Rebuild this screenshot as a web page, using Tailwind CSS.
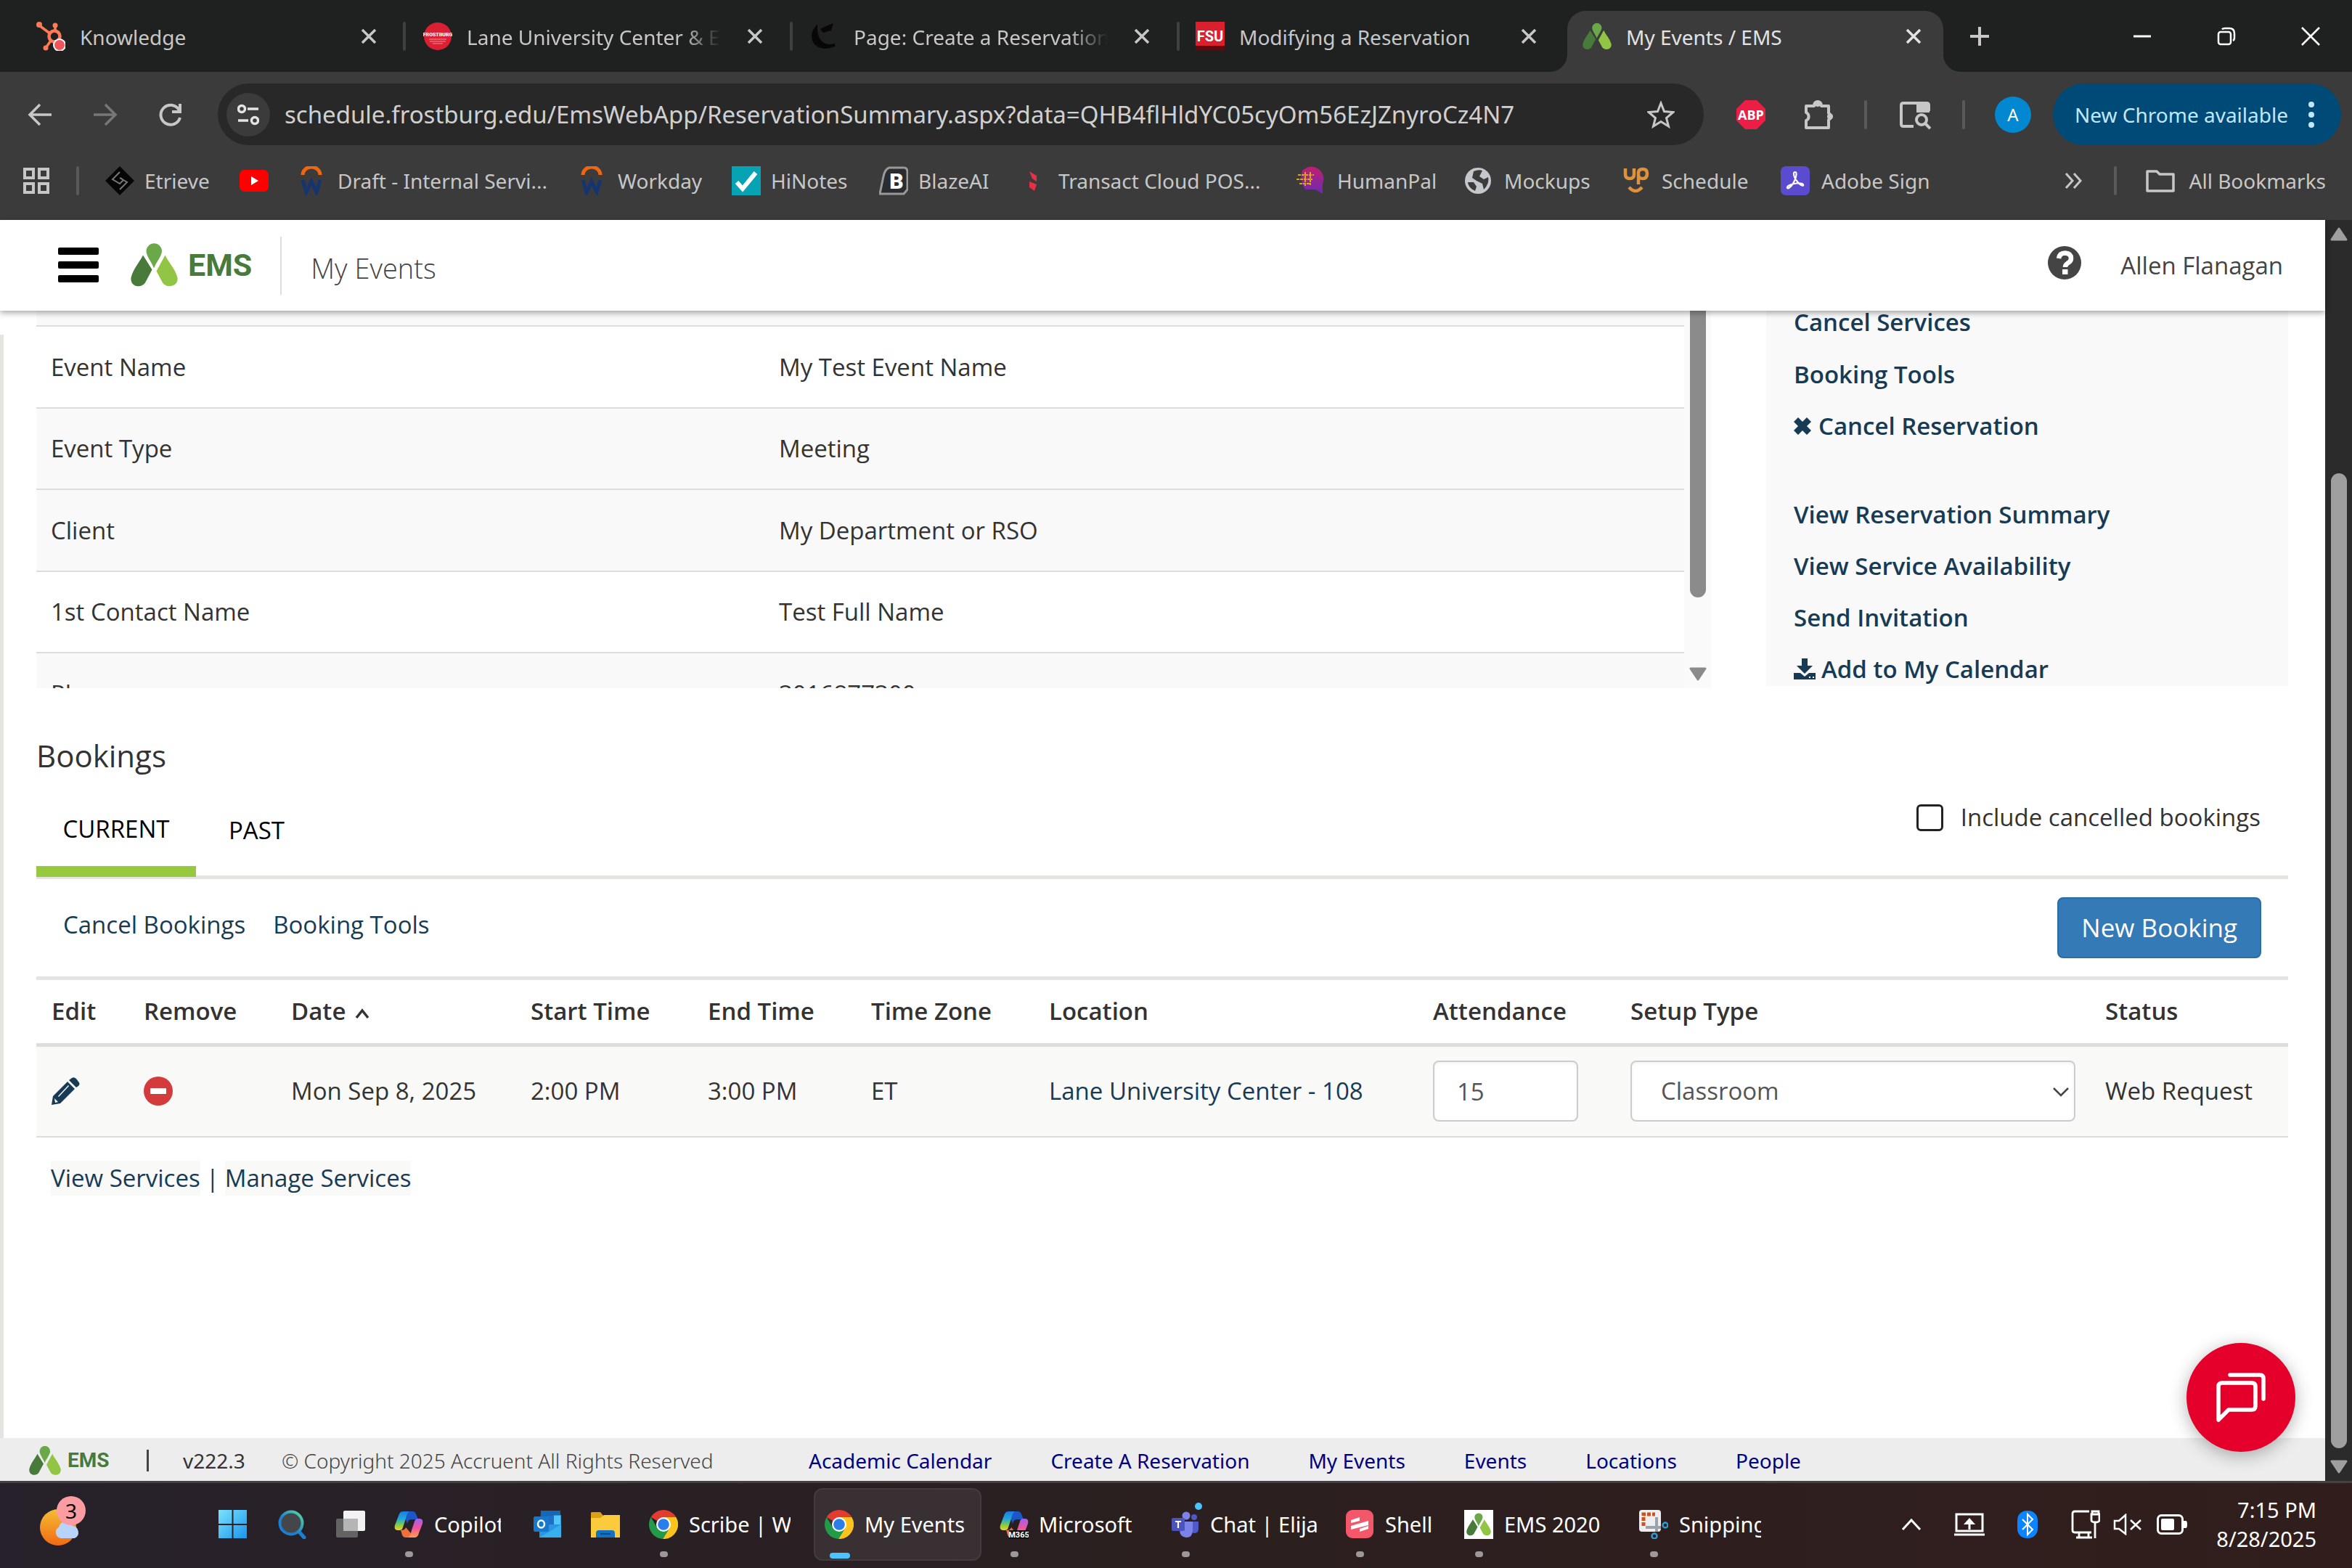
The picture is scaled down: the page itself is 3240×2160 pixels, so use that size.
<!DOCTYPE html>
<html lang="en">
<head>
<meta charset="utf-8">
<title>My Events / EMS</title>
<script src="https://cdn.jsdelivr.net/npm/@tailwindcss/browser@4"></script>
</head>
<body class="flex h-screen flex-col overflow-hidden bg-white font-['Open_Sans',sans-serif] text-[33px] leading-[48px] text-[#333]">

<svg class="absolute h-0 w-0" aria-hidden="true">
  <symbol id="ems" viewBox="0 0 65 59">
    <path fill="#6aa84a" d="M32 34C29 26 21.500 17 21.500 10.500A10.500 10.500 0 0 1 43 10.500C43 17 35 26 32 34z"/>
    <path fill="#487a3b" d="M17 16L29.500 36L20 54C15 62-1 60 .5 47C4 34 12 26 17 16z"/>
    <path fill="#92c544" d="M47.500 16L35.500 38L44 54C49 62 66 60 64.500 47C61 34 52 26 47.500 16z"/>
  </symbol>
  <symbol id="x" viewBox="0 0 22 22"><path d="M2 2L20 20M20 2L2 20" fill="none" stroke="currentColor" stroke-width="3.500"/></symbol>
  <symbol id="workday" viewBox="0 0 32 40">
    <path d="M4 12a12 11 0 0 1 24 0" fill="none" stroke="#f0660f" stroke-width="5"/>
    <path d="M4 19L9 36L16 21L23 36L28 19" fill="none" stroke="#16356f" stroke-width="5"/>
  </symbol>
  <symbol id="chrome" viewBox="0 0 40 40">
    <path fill="#e33b2e" d="M20 20L2.700 10A20 20 0 0 1 37.300 10z"/>
    <path fill="#fcc31e" d="M20 10H37.300A20 20 0 0 1 19 40L28.500 24z"/>
    <path fill="#229a48" d="M2.700 10A20 20 0 0 0 19 40L28.500 25L20 29L11.500 25z"/>
    <circle cx="20" cy="20" r="10" fill="#fff"/><circle cx="20" cy="20" r="7.800" fill="#2b7de9"/>
  </symbol>
  <linearGradient id="cpA" x1="0" y1="0" x2="0" y2="1"><stop offset="0" stop-color="#1b7be8"/><stop offset=".4" stop-color="#22a7d8"/><stop offset=".7" stop-color="#7cc950"/><stop offset="1" stop-color="#f5d21c"/></linearGradient>
  <linearGradient id="cpB" x1="0" y1="0" x2="0" y2="1"><stop offset="0" stop-color="#a060f0"/><stop offset=".5" stop-color="#f0549c"/><stop offset="1" stop-color="#fba049"/></linearGradient>
  <symbol id="copilot" viewBox="0 0 40 40">
    <path fill="#1c56c9" d="M12 2h13c4 0 5 3 6 6l2 5h-9c-4 0-5 3-6 6z"/>
    <path fill="url(#cpA)" d="M12 2h9c-3 2-4 6-5 10l-4 12c-1 3-2 4-5 4H5c-4 0-5-3-4-7L6 8c1-4 3-6 6-6z"/>
    <path fill="#f0703c" d="M28 38H16c-4 0-5-3-6-7l-1-3c4 0 6-1 7-4z"/>
    <path fill="url(#cpB)" d="M28 38h-9c3-2 4-6 5-10l4-12c1-3 2-4 5-4h2c4 0 5 3 4 7l-5 13c-1 4-3 6-6 6z"/>
  </symbol>
</svg>

<!-- Tab strip -->
<header class="shrink-0 bg-[#3b3b3b] font-['Noto_Sans','Open_Sans',sans-serif] text-[28px] leading-[40px] text-[#c7c7c7]">
  <div class="flex h-[99px] bg-[#1f2120] pl-[22px]">
    <div class="flex w-[533px] min-w-0 items-center pr-[36px] pl-[28px]">
      <svg class="h-10 w-10 shrink-0" viewBox="0 0 40 40"><g stroke="#ff7a59" stroke-width="3.500" fill="none"><path d="M4 5L20 17M26 6V14M20 26L13 36"/><circle cx="25" cy="20" r="7.500" stroke-width="4.500"/></g><circle cx="4" cy="4" r="4" fill="#ff7a59"/><circle cx="26" cy="5" r="3.500" fill="#ff7a59"/><circle cx="13" cy="36" r="3.500" fill="#ff7a59"/><circle cx="32" cy="32" r="9" fill="#fff"/><circle cx="32" cy="32" r="7" fill="#f2545b"/></svg>
      <span class="ml-5 flex-1 truncate pt-0.5">Knowledge</span>
      <button aria-label="Close tab"><svg class="h-[22px] w-[22px]"><use href="#x"/></svg></button>
    </div>
    <div class="flex w-[533px] min-w-0 items-center pr-[37px]">
      <i class="h-10 w-1 shrink-0 rounded bg-[#3f4140]"></i>
      <svg class="ml-[24px] h-10 w-10 shrink-0" viewBox="0 0 40 40"><circle cx="20" cy="20" r="19" fill="#dc1f33"/><text x="20" y="20" text-anchor="middle" font-family="Roboto" font-weight="900" font-size="7" fill="#fff">FROSTBURG</text><path d="M8 24H32M9 27H31M13 30H27" stroke="#f0909a" stroke-width="1"/></svg>
      <span class="mr-[36px] ml-5 flex-1 overflow-hidden pt-0.5 whitespace-nowrap [mask-image:linear-gradient(to_right,#000_85%,transparent)]">Lane University Center &amp; Ev</span>
      <button aria-label="Close tab"><svg class="h-[22px] w-[22px]"><use href="#x"/></svg></button>
    </div>
    <div class="flex w-[533px] min-w-0 items-center pr-[37px]">
      <i class="h-10 w-1 shrink-0 rounded bg-[#3f4140]"></i>
      <svg class="ml-[24px] h-10 w-10 shrink-0" viewBox="0 0 40 40"><path d="M8 9C-3 24 10 42 34 32C18 36 8 26 8 9z" fill="#070707" stroke="#070707" stroke-width="4"/><path d="M14 10L24 5L32 2L29 12L18 15z" fill="#070707"/></svg>
      <span class="mr-[36px] ml-5 flex-1 overflow-hidden pt-0.5 whitespace-nowrap [mask-image:linear-gradient(to_right,#000_85%,transparent)]">Page: Create a Reservation</span>
      <button aria-label="Close tab"><svg class="h-[22px] w-[22px]"><use href="#x"/></svg></button>
    </div>
    <div class="flex w-[533px] min-w-0 items-center pr-[37px]">
      <i class="h-10 w-1 shrink-0 rounded bg-[#3f4140]"></i>
      <svg class="ml-[22px] h-10 w-10 shrink-0" viewBox="0 0 40 40"><rect width="40" height="40" fill="#d9202c"/><path d="M0 33H40V40H0z" fill="#5c0a0e"/><text x="20" y="27" text-anchor="middle" font-family="Roboto" font-weight="700" font-size="20" fill="#fff">FSU</text></svg>
      <span class="ml-5 flex-1 truncate pt-0.5">Modifying a Reservation</span>
      <button aria-label="Close tab"><svg class="h-[22px] w-[22px]"><use href="#x"/></svg></button>
    </div>
    <div class="relative mt-[15px] ml-[5px] flex w-[518px] min-w-0 items-center rounded-t-[25px] bg-[#3b3b3b] pr-[30px] pb-[14px] pl-[21px] text-[#e3e3e3]">
      <svg class="absolute bottom-0 -left-6 h-6 w-6" viewBox="0 0 24 24"><path d="M24 0V24H0A24 24 0 0 0 24 0z" fill="#3b3b3b"/></svg>
      <svg class="absolute -right-6 bottom-0 h-6 w-6" viewBox="0 0 24 24"><path d="M0 0V24H24A24 24 0 0 1 0 0z" fill="#3b3b3b"/></svg>
      <svg class="h-10 w-10 shrink-0"><use href="#ems"/></svg>
      <span class="ml-5 flex-1 truncate pt-0.5">My Events / EMS</span>
      <button aria-label="Close tab"><svg class="h-[22px] w-[22px]"><use href="#x"/></svg></button>
    </div>
    <button aria-label="New tab" class="ml-[37px]"><svg class="h-[26px] w-[26px]" viewBox="0 0 26 26"><path d="M13 0V26M0 13H26" stroke="#c7c7c7" stroke-width="4"/></svg></button>
    <div class="mr-[44px] ml-auto flex items-center gap-[90px] text-white">
      <button aria-label="Minimize"><svg class="h-[26px] w-[26px]" viewBox="0 0 26 26"><path d="M1 13H25" stroke="#fff" stroke-width="3"/></svg></button>
      <button aria-label="Restore"><svg class="h-[26px] w-[26px]" viewBox="0 0 26 26" fill="none" stroke="#fff" stroke-width="2.500"><rect x="2" y="7" width="17" height="17" rx="3"/><path d="M7 3.500Q8 2 11 2H17Q24 2 24 9V15Q24 18 22 19"/></svg></button>
      <button aria-label="Close window"><svg class="h-[26px] w-[26px]" viewBox="0 0 26 26"><path d="M1 1L25 25M25 1L1 25" stroke="#fff" stroke-width="2.500"/></svg></button>
    </div>
  </div>

  <!-- Address bar -->
  <div class="flex h-[117px] items-center pr-[15px] pl-[38px]">
    <div class="flex items-center gap-[56px]">
      <button aria-label="Back"><svg class="h-[34px] w-[34px]" viewBox="0 0 34 34"><path d="M33 17H4M17 3L3 17L17 31" fill="none" stroke="#c7c7c7" stroke-width="3.500"/></svg></button>
      <button aria-label="Forward"><svg class="h-[34px] w-[34px]" viewBox="0 0 34 34"><path d="M1 17H30M17 3L31 17L17 31" fill="none" stroke="#777" stroke-width="3.500"/></svg></button>
      <button aria-label="Reload"><svg class="h-[34px] w-[34px]" viewBox="0 0 34 34"><path d="M29 11A13.500 13.500 0 1 0 30 21M30 2V13H19" fill="none" stroke="#c7c7c7" stroke-width="4"/></svg></button>
    </div>
    <div class="ml-12 flex h-[85px] min-w-0 flex-1 items-center rounded-full bg-[#282828] pr-[40px] pl-3">
      <button aria-label="Site information" class="flex h-[60px] w-[60px] shrink-0 items-center justify-center rounded-full bg-[#3b3b3b]"><svg class="h-[30px] w-[30px]" viewBox="0 0 30 30" fill="none" stroke="#e3e3e3" stroke-width="3.500"><circle cx="6" cy="7" r="4.500"/><path d="M14 7H29M1 23H15"/><circle cx="24" cy="23" r="4.500"/></svg></button>
      <input aria-label="Address" class="ml-5 min-w-0 flex-1 bg-transparent text-[33px] leading-[48px] text-[#d0d0d0]" value="schedule.frostburg.edu/EmsWebApp/ReservationSummary.aspx?data=QHB4flHldYC05cyOm56EzJZnyroCz4N7">
      <button aria-label="Bookmark this page"><svg class="h-[38px] w-[38px]" viewBox="0 0 38 38"><path d="M19 3L23.500 14.500L36 15.500L26.500 23.500L29.500 35L19 28.500L8.500 35L11.500 23.500L2 15.500L14.500 14.500z" fill="none" stroke="#c7c7c7" stroke-width="3"/></svg></button>
    </div>
    <button aria-label="ABP" class="ml-[45px]"><svg class="h-10 w-10" viewBox="0 0 40 40"><path d="M12 0H28L40 12V28L28 40H12L0 28V12z" fill="#ed1e45"/><text x="20" y="26.500" text-anchor="middle" font-family="Open Sans" font-weight="700" font-size="18" fill="#fff">ABP</text></svg></button>
    <button aria-label="Extensions" class="ml-[52px]"><svg class="h-[42px] w-[42px]" viewBox="0 0 42 42"><path d="M4 9H15V8A5 5 0 0 1 25 8V9H35V19A5 5 0 0 1 35 28V39H4V29A6 6 0 0 0 4 18z" fill="none" stroke="#c7c7c7" stroke-width="4" stroke-linejoin="round"/><circle cx="37" cy="23.500" r="4" fill="#c7c7c7"/><circle cx="20" cy="6" r="4" fill="#c7c7c7"/></svg></button>
    <i class="ml-[42px] h-10 w-1 rounded bg-[#5a5a5a]"></i>
    <button aria-label="Search tabs" class="ml-[44px]"><svg class="h-[42px] w-[44px]" viewBox="0 0 44 42"><path d="M20 37H6Q3 37 3 34V8Q3 5 6 5H38Q41 5 41 8V16" fill="none" stroke="#c7c7c7" stroke-width="4"/><path d="M24 5H42V18H24z" fill="#c7c7c7"/><circle cx="31" cy="28" r="7" fill="none" stroke="#c7c7c7" stroke-width="4"/><path d="M36 33L43 40" stroke="#c7c7c7" stroke-width="4"/></svg></button>
    <i class="ml-[43px] h-10 w-1 rounded bg-[#5a5a5a]"></i>
    <button class="ml-[41px] flex h-[50px] w-[50px] items-center justify-center rounded-full bg-[#0288d1] text-[24px] text-white">A</button>
    <button class="ml-[30px] flex h-[85px] items-center rounded-full bg-[#004a77] pr-[36px] pl-[30px] text-[#c2e7ff]">New Chrome available<svg class="ml-[27px] h-[36px] w-[10px]" viewBox="0 0 10 36" fill="#c2e7ff"><circle cx="5" cy="4" r="4"/><circle cx="5" cy="18" r="4"/><circle cx="5" cy="32" r="4"/></svg></button>
  </div>

  <!-- Bookmarks bar -->
  <nav class="flex h-[87px] items-center whitespace-nowrap pb-[21px] pl-[32px]">
    <svg class="h-[36px] w-[36px] shrink-0" viewBox="0 0 36 36" fill="none" stroke="#c7c7c7" stroke-width="4"><path d="M2 2H14V14H2zM22 2H34V14H22zM2 22H14V34H2zM22 22H34V34H22z"/></svg>
    <i class="ml-[37px] h-10 w-1 shrink-0 rounded bg-[#5a5a5a]"></i>
    <a href="#" class="ml-[36px] flex w-[185px] items-center gap-[14px]"><svg class="h-10 w-10" viewBox="0 0 40 40"><path d="M20 0L40 20L20 40L0 20z" fill="#050505"/><path d="M20 8L10 18L20 24L25 19L21 16M20 32L30 22L20 16" fill="none" stroke="#777" stroke-width="2"/></svg>Etrieve</a>
    <a href="#" aria-label="YouTube" class="w-[83px]"><svg class="h-[30px] w-10" viewBox="0 0 40 30"><rect width="40" height="30" rx="7" fill="#f00"/><path d="M16 9L26 15L16 21z" fill="#fff"/></svg></a>
    <a href="#" class="flex w-[386px] items-center gap-5"><svg class="h-10 w-8"><use href="#workday"/></svg>Draft - Internal Servi...</a>
    <a href="#" class="flex w-[209px] items-center gap-5"><svg class="h-10 w-8"><use href="#workday"/></svg>Workday</a>
    <a href="#" class="flex w-[203px] items-center gap-[14px]"><svg class="h-10 w-10" viewBox="0 0 40 40"><rect width="40" height="40" fill="#06a3b5"/><path d="M7 22L15 31L33 9" fill="none" stroke="#fff" stroke-width="6"/></svg>HiNotes</a>
    <a href="#" class="flex w-[201px] items-center gap-[14px]"><svg class="h-10 w-10" viewBox="0 0 40 40"><path d="M14 2H34Q39 2 39 8V32L34 38H1L6 14Q8 4 14 2z" fill="#2a2c2f" stroke="#999" stroke-width="3"/><text x="24" y="31" text-anchor="middle" font-family="Roboto" font-weight="900" font-size="30" fill="#fff">B</text></svg>BlazeAI</a>
    <a href="#" class="flex w-[374px] items-center gap-[20px]"><svg class="h-10 w-[26px]" viewBox="0 0 26 40" fill="#e82f45"><path d="M6 7L16 13V21L10 17zM6 21L16 25L13 34L6 29z"/></svg>Transact Cloud POS...</a>
    <a href="#" class="flex w-[232px] items-center gap-4"><svg class="h-10 w-10" viewBox="0 0 40 40"><linearGradient id="hp" x1="0" y1="0" x2="0" y2="1"><stop offset="0" stop-color="#c01f6e"/><stop offset="1" stop-color="#6a2bb5"/></linearGradient><path d="M8 6Q20-4 32 5Q40 14 36 24V38L26 32H12Q4 20 8 6z" fill="url(#hp)"/><path d="M2 12H24M0 18H22M4 24H20M12 8V28M19 8V26" stroke="#d9a520" stroke-width="2" stroke-dasharray="4 1"/></svg>HumanPal</a>
    <a href="#" class="flex w-[217px] items-center gap-[18px]"><svg class="h-[36px] w-[36px]" viewBox="0 0 36 36"><circle cx="18" cy="18" r="18" fill="#c4c8cc"/><path d="M4 20L12 20L16 26L14 32Q5 28 4 20zM12 5Q20 2 24 4L20 12L26 16L32 13Q34 22 26 30L24 22L16 18L10 14z" fill="#3b3b3b"/></svg>Mockups</a>
    <a href="#" class="flex w-[218px] items-center gap-4"><svg class="h-10 w-[38px]" viewBox="0 0 38 40" fill="none" stroke="#e0913a" stroke-width="4.500"><path d="M4 3V11Q4 17 10 17Q16 17 16 11V3"/><path d="M22 25V9Q22 4 28 4Q34 4 34 10Q34 17 28 17Q23 17 22 13"/><path d="M9 29Q18 39 27 29"/></svg>Schedule</a>
    <a href="#" class="flex items-center gap-4"><svg class="h-10 w-10" viewBox="0 0 40 40"><rect width="40" height="40" rx="7" fill="#5a4bcf"/><path d="M20 8C23 8 21 16 19 20C17 25 11 32 9 30C8 27 16 24 22 23.500C27 23 32 24 31 26.500C28 28 18 18 18 10Q18 8 20 8z" fill="none" stroke="#fff" stroke-width="2.200"/></svg>Adobe Sign</a>
    <div class="mr-[36px] ml-auto flex items-center">
      <svg class="h-[24px] w-[26px]" viewBox="0 0 26 24"><path d="M2 2L11 12L2 22M13 2L22 12L13 22" fill="none" stroke="#c7c7c7" stroke-width="3"/></svg>
      <i class="ml-[42px] h-10 w-1 rounded bg-[#5a5a5a]"></i>
      <a href="#" class="ml-10 flex items-center gap-5"><svg class="h-[32px] w-10" viewBox="0 0 40 32"><path d="M2 3H15L19 7H38V30H2z" fill="none" stroke="#c7c7c7" stroke-width="3.500" stroke-linejoin="round"/></svg>All Bookmarks</a>
    </div>
  </nav>
</header>

<!-- Page viewport -->
<div class="relative flex min-h-0 flex-1">
  <div class="flex min-w-0 flex-1 flex-col">
    <header class="relative z-10 flex h-[125px] shrink-0 items-center bg-white pr-[58px] pl-20 shadow-[0_3px_8px_rgba(0,0,0,0.35)]">
      <button aria-label="Menu" class="mb-[2px] flex w-14 flex-col gap-[9px]"><i class="h-[10px] rounded-xs bg-black"></i><i class="h-[10px] rounded-xs bg-black"></i><i class="h-[10px] rounded-xs bg-black"></i></button>
      <svg class="mb-[2px] ml-11 h-[60px] w-[65px]"><use href="#ems"/></svg>
      <span class="mb-[2px] ml-[14px] font-['Roboto',sans-serif] text-[43px] font-bold text-[#487a3b]">EMS</span>
      <i class="ml-[39px] h-20 w-[2px] bg-[#ddd]"></i>
      <h1 class="ml-10 pt-[6px] text-[38px] font-light text-[#444]">My Events</h1>
      <svg class="mb-2 ml-auto h-[46px] w-[46px]" viewBox="0 0 46 46"><circle cx="23" cy="23" r="23" fill="#444"/><path d="M15 17Q16 9.500 24 9.500Q32 10 32 17Q32 21 27.500 23.500Q24 25.500 24 29" fill="none" stroke="#fff" stroke-width="6.500"/><rect x="20" y="32" width="7.500" height="7" fill="#fff"/></svg>
      <a href="#" class="ml-[54px] text-[#444]">Allen Flanagan</a>
    </header>

    <main class="relative min-h-0 flex-1 overflow-hidden pr-[51px] pl-[50px]">
      <i class="absolute top-[33px] bottom-0 left-0 w-[5px] bg-[#e4e4e0]"></i>
      <div class="flex h-[520px] overflow-hidden">
        <div class="min-w-0 flex-1 overflow-hidden">
          <table class="w-full table-fixed border-collapse">
            <colgroup><col class="w-[1002px]"><col></colgroup>
            <tbody>
              <tr class="h-[21px] border-b-2 border-[#ddd] bg-[#f9f9f9]"><td></td><td></td></tr>
              <tr class="h-[113px] border-b-2 border-[#ddd]"><td class="pl-[20px]">Event Name</td><td class="pl-[21px]">My Test Event Name</td></tr>
              <tr class="h-[112px] border-b-2 border-[#ddd] bg-[#f9f9f9]"><td class="pl-[20px]">Event Type</td><td class="pl-[21px]">Meeting</td></tr>
              <tr class="h-[113px] border-b-2 border-[#ddd] bg-[#f9f9f9]"><td class="pl-[20px]">Client</td><td class="pl-[21px]">My Department or RSO</td></tr>
              <tr class="h-[112px] border-b-2 border-[#ddd]"><td class="pl-[20px]">1st Contact Name</td><td class="pl-[21px]">Test Full Name</td></tr>
              <tr class="h-[112px] bg-[#f9f9f9]"><td class="pl-[20px]">Phone</td><td class="pl-[21px]">3016877300</td></tr>
            </tbody>
          </table>
        </div>
        <div class="flex w-[37px] flex-col items-center bg-[#fafafa]">
          <i class="h-[395px] w-[22px] rounded-b-full bg-[#8b8b8b]"></i>
          <svg class="mt-[96px] h-[19px] w-6" viewBox="0 0 24 19"><path d="M2 2H22L12 17z" fill="#8b8b8b" stroke="#8b8b8b" stroke-width="3" stroke-linejoin="round"/></svg>
        </div>
        <nav class="ml-[76px] flex h-[517px] w-[719px] flex-col bg-[#f9f9f9] pl-[38px] font-semibold text-[#173b54]">
          <a href="#" class="-mt-5 h-[72px] leading-[72px]">Cancel Services</a>
          <a href="#" class="h-[71px] leading-[71px]">Booking Tools</a>
          <a href="#" class="mb-[50px] flex h-[72px] items-center gap-[10px] leading-[72px]"><svg class="h-6 w-6" viewBox="0 0 24 24"><path d="M3 3L21 21M21 3L3 21" stroke="#173b54" stroke-width="8.500"/></svg>Cancel Reservation</a>
          <a href="#" class="h-[71px] leading-[71px]">View Reservation Summary</a>
          <a href="#" class="h-[71px] leading-[71px]">View Service Availability</a>
          <a href="#" class="h-[71px] leading-[71px]">Send Invitation</a>
          <a href="#" class="flex h-[71px] items-center gap-2 leading-[71px]"><svg class="h-[30px] w-[30px]" viewBox="0 0 30 30" fill="#173b54"><path d="M11 0H19V10H26L15 21L4 10H11zM0 20H9L15 25L21 20H30V29H0z"/><path d="M21 25H23V27H21zM26 25H28V27H26z" fill="#fff"/></svg>Add to My Calendar</a>
        </nav>
      </div>

      <h2 class="pt-[64px] text-[42px] leading-[58px]">Bookings</h2>
      <div class="flex h-[141px] border-b-[5px] border-[#e4e4e0] text-black">
        <button class="relative w-[220px] pt-2">CURRENT<i class="absolute right-0 -bottom-[2px] left-0 h-[15px] bg-[#97c93d]"></i></button>
        <button class="ml-[45px] pt-3">PAST</button>
        <label class="mr-[38px] mb-6 ml-auto flex items-center gap-6 text-[#333]"><input type="checkbox" class="h-[37px] w-[37px] appearance-none rounded-md border-[3px] border-[#222] bg-white">Include cancelled bookings</label>
      </div>
      <div class="flex h-[139px] items-center gap-[38px] border-b-[5px] border-[#e4e4e0] pr-[37px] pl-[37px] text-[#173b54]">
        <a href="#" class="mb-2">Cancel Bookings</a>
        <a href="#" class="mb-2">Booking Tools</a>
        <button class="ml-auto h-[84px] rounded-lg border-2 border-[#2e6da4] bg-[#337ab7] px-[31px] text-[35px] text-white">New Booking</button>
      </div>
      <table class="w-full table-fixed border-collapse text-left whitespace-nowrap">
        <colgroup><col class="w-[127px]"><col class="w-[203px]"><col class="w-[330px]"><col class="w-[244px]"><col class="w-[225px]"><col class="w-[245px]"><col><col class="w-[272px]"><col class="w-[654px]"><col class="w-[273px]"></colgroup>
        <thead>
          <tr class="h-[89px] border-b-[5px] border-[#ddd] [&>th]:pl-[21px] [&>th]:font-semibold">
            <th>Edit</th><th>Remove</th><th>Date <svg class="ml-1 inline h-[16px] w-5" viewBox="0 0 20 16"><path d="M2 14L10 4L18 14" fill="none" stroke="#333" stroke-width="3.500"/></svg></th><th>Start Time</th><th>End Time</th><th>Time Zone</th><th>Location</th><th>Attendance</th><th>Setup Type</th><th>Status</th>
          </tr>
        </thead>
        <tbody>
          <tr class="h-[127px] border-b-2 border-[#ddd] bg-[#f9f9f8] [&>td]:pl-[21px]">
            <td><button aria-label="Edit" class="flex"><svg class="h-[38px] w-[39px]" viewBox="0 0 39 38" fill="#173b54"><path d="M0 38L2 26L22 6L32 16L12 36zM24 4L28 1Q31-1 34 2L37 6Q40 9 37 12L34 14z"/><path d="M4 29L9 34L5 35zM9 26L23 11L24 12L10 27z" fill="#fff"/></svg></button></td>
            <td><button aria-label="Remove" class="flex"><svg class="h-10 w-10" viewBox="0 0 40 40"><circle cx="20" cy="20" r="20" fill="#d43b3d"/><rect x="9" y="16" width="22" height="8" rx="1" fill="#fff"/></svg></button></td>
            <td>Mon Sep 8, 2025</td><td>2:00 PM</td><td>3:00 PM</td><td>ET</td>
            <td><a href="#" class="text-[#173b54]">Lane University Center - 108</a></td>
            <td><input aria-label="Attendance" value="15" class="block h-[84px] w-[200px] rounded-lg border-2 border-[#ccc] bg-white px-[31px] text-[#555] inset-shadow-sm"></td>
            <td><div class="relative w-[613px]"><select aria-label="Setup Type" class="block h-[84px] w-full appearance-none rounded-lg border-2 border-[#ccc] bg-white px-10 text-[#555] inset-shadow-sm"><option>Classroom</option></select><svg class="absolute top-9 right-[9px] h-[14px] w-[22px]" viewBox="0 0 22 14"><path d="M1 2L11 12L21 2" fill="none" stroke="#444" stroke-width="2.500"/></svg></div></td>
            <td>Web Request</td>
          </tr>
        </tbody>
      </table>
      <p class="mt-8 flex gap-2 pl-5"><a href="#" class="bg-[#f9f9f8] text-[#173b54]">View Services</a><span>|</span><a href="#" class="bg-[#f9f9f8] text-[#173b54]">Manage Services</a></p>
    </main>

    <footer class="flex h-[59px] shrink-0 items-center bg-[#ededed] pt-[2px] pl-10 font-['Noto_Sans','Open_Sans',sans-serif] text-[28px] leading-[40px] whitespace-nowrap">
      <svg class="h-10 w-11"><use href="#ems"/></svg>
      <span class="ml-[9px] w-[109px] font-['Roboto',sans-serif] text-[28px] font-bold text-[#487a3b]">EMS</span>
      <i class="h-[30px] w-[3px] bg-[#444]"></i>
      <span class="ml-[47px] w-[136px]">v222.3</span>
      <span class="w-[726px] font-light text-[#444]">© Copyright 2025 Accruent All Rights Reserved</span>
      <nav class="flex gap-[81px] text-[#000080]"><a href="#">Academic Calendar</a><a href="#">Create A Reservation</a><a href="#">My Events</a><a href="#">Events</a><a href="#">Locations</a><a href="#">People</a></nav>
    </footer>
  </div>

  <div class="flex w-[37px] shrink-0 flex-col items-center bg-[#2b2b2b] pt-[10px] pb-[10px]">
    <svg class="h-[19px] w-6" viewBox="0 0 24 19"><path d="M2 17H22L12 2z" fill="#9f9f9f" stroke="#9f9f9f" stroke-width="3" stroke-linejoin="round"/></svg>
    <i class="mt-[320px] w-[22px] flex-1 rounded-full bg-[#9f9f9f]"></i>
    <svg class="mt-4 h-[19px] w-6" viewBox="0 0 24 19"><path d="M2 2H22L12 17z" fill="#9f9f9f" stroke="#9f9f9f" stroke-width="3" stroke-linejoin="round"/></svg>
  </div>

  <button aria-label="Chat" class="absolute right-[78px] bottom-10 z-20 flex h-[150px] w-[150px] items-center justify-center rounded-full bg-[#e4002b] shadow-[0_5px_24px_rgba(0,0,0,0.3)]"><svg class="h-[68px] w-[68px]" viewBox="0 0 68 68" fill="none" stroke="#fff" stroke-width="5.500" stroke-linecap="round" stroke-linejoin="round"><path d="M3 65V19Q3 14 8 14H49Q54 14 54 19V46Q54 51 49 51H17z"/><path d="M19 3H60Q65 3 65 8V36"/></svg></button>
</div>

<!-- Taskbar -->
<footer class="flex h-[120px] shrink-0 items-center border-t-[3px] border-[#454143] bg-linear-to-r from-[#26212a] via-[#2b1f1f] to-[#311e1c] pb-1 pl-[54px] font-['Noto_Sans','Open_Sans',sans-serif] text-[29px] leading-[40px] whitespace-nowrap text-white">
  <button aria-label="Widgets" class="relative mr-[177px] mb-[7px] h-[70px] w-[70px] shrink-0"><svg class="h-[70px] w-[70px]" viewBox="0 0 70 70"><linearGradient id="sun" x1="0" y1="0" x2="0" y2="1"><stop offset="0" stop-color="#f4bd35"/><stop offset="1" stop-color="#f26a13"/></linearGradient><circle cx="26" cy="43" r="25" fill="url(#sun)"/><path d="M30 58A8 8 0 0 1 27 43A10 10 0 0 1 46 41A9 9 0 0 1 49 58z" fill="#b9d4fa"/></svg><span class="absolute top-0 right-[6px] h-10 w-10 rounded-full bg-[#fb9ba2] text-center text-[28px] leading-10 text-black">3</span></button>
  <button aria-label="Start" class="w-[82px] shrink-0"><svg class="h-[39px] w-[39px]" viewBox="0 0 39 39"><linearGradient id="win" x1="0" y1="0" x2="1" y2="1"><stop offset="0" stop-color="#7be3fb"/><stop offset="1" stop-color="#1a94ee"/></linearGradient><path fill="url(#win)" d="M0 0H18.500V19H0zM20.500 0H39V19H20.500zM0 21H18.500V39H0zM20.500 21H39V39H20.500z"/></svg></button>
  <button aria-label="Search" class="w-[80px] shrink-0"><svg class="h-10 w-10" viewBox="0 0 40 40"><linearGradient id="mag" x1="1" y1="0" x2="0" y2="1"><stop offset="0" stop-color="#58dba0"/><stop offset=".6" stop-color="#1a7fd0"/><stop offset="1" stop-color="#1a7fd0"/></linearGradient><path d="M28 29L36 38" stroke="#1a7fd0" stroke-width="5" stroke-linecap="round"/><circle cx="18" cy="18" r="15.500" fill="#45464a" stroke="url(#mag)" stroke-width="4"/></svg></button>
  <button aria-label="Task view" class="w-[80px] shrink-0"><svg class="h-10 w-10" viewBox="0 0 40 40"><rect x="10" y="1" width="30" height="28" rx="2" fill="#f2f2f2"/><rect y="12" width="30" height="26" rx="2" fill="#636363"/><path d="M10 12H28Q30 12 30 14V29H10z" fill="#b5b5b5"/></svg></button>
  <button class="relative flex w-[191px] shrink-0 items-center gap-[15px]"><svg class="h-10 w-10 shrink-0"><use href="#copilot"/></svg><span class="w-[92px] overflow-hidden">Copilot</span><i class="absolute top-[57px] left-[15px] h-2 w-[11px] rounded-full bg-[#9d999b]"></i></button>
  <button aria-label="Outlook" class="w-[80px] shrink-0"><svg class="h-10 w-10" viewBox="0 0 40 40"><path d="M11 1H38V38H9z" fill="#1468b8"/><path d="M29 7H39V38H9V28H19z" fill="#2a95e2"/><path d="M20 8H38V20H20z" fill="#50c8f4"/><path d="M20 8H29V20H20z" fill="#1c6fc2"/><path d="M9 38L39 20V38z" fill="#37b0ee"/><rect x="1" y="9" width="21" height="21" rx="2" fill="#1579d0"/><ellipse cx="11.500" cy="19.500" rx="4.500" ry="5" fill="none" stroke="#fff" stroke-width="2.500"/></svg></button>
  <button aria-label="File Explorer" class="w-[80px] shrink-0"><svg class="h-10 w-10" viewBox="0 0 40 40"><path d="M0 4Q0 3 2 3H13L18 9V14H0z" fill="#dba014"/><path d="M0 11H13L18 7H40V38H0z" fill="#fccb3c"/><path d="M7 38V32Q7 28 11 28H29Q33 28 33 32V38z" fill="#1271c4"/><path d="M13 33H27" stroke="#0b4d8c" stroke-width="2"/></svg></button>
  <button class="relative flex w-[227px] shrink-0 items-center gap-[15px]"><svg class="h-10 w-10 shrink-0"><use href="#chrome"/></svg><span class="w-[140px] overflow-hidden">Scribe | Wo</span><i class="absolute top-[57px] left-[15px] h-2 w-[11px] rounded-full bg-[#9d999b]"></i></button>
  <button class="relative mr-[25px] flex h-[100px] w-[231px] shrink-0 items-center gap-[15px] rounded-xl border-2 border-[#433b3d] bg-[#383033] pl-[13px]"><svg class="h-10 w-10 shrink-0"><use href="#chrome"/></svg>My Events<i class="absolute bottom-[1px] left-[20px] h-2 w-7 rounded-full bg-[#4cc2ff]"></i></button>
  <button class="relative flex w-[236px] shrink-0 items-center gap-[14px]"><svg class="h-10 w-10 shrink-0" viewBox="0 0 40 40"><use href="#copilot"/><rect x="13" y="28" width="27" height="12" fill="#111"/><text x="26.500" y="38" text-anchor="middle" font-family="Roboto" font-weight="700" font-size="11" fill="#fff">M365</text></svg>Microsoft<i class="absolute top-[57px] left-[15px] h-2 w-[11px] rounded-full bg-[#9d999b]"></i></button>
  <button class="relative flex w-[240px] shrink-0 items-center gap-[14px]"><svg class="h-10 w-10 shrink-0" viewBox="0 0 40 40"><circle cx="21" cy="8" r="5.500" fill="#7b83eb"/><circle cx="32" cy="10" r="4" fill="#5059c9"/><path d="M26 16H38V26Q38 32 32 32Q26 31 26 26z" fill="#5059c9"/><path d="M12 16H30V28Q30 38 21 38Q12 37 12 28z" fill="#7b83eb"/><rect x="1" y="11" width="18" height="18" rx="2" fill="#4b53bc"/><path d="M6 16H14M10 16V25" stroke="#fff" stroke-width="2.200"/></svg>Chat | Elija<i class="absolute -top-[10px] left-[33px] h-[10px] w-[10px] rounded-full bg-[#4cc2ff]"></i><i class="absolute top-[57px] left-[15px] h-2 w-[11px] rounded-full bg-[#9d999b]"></i></button>
  <button class="relative flex w-[164px] shrink-0 items-center gap-[15px]"><svg class="h-10 w-10 shrink-0" viewBox="0 0 40 40"><rect x="1" width="38" height="39" rx="9" fill="#f4566a"/><path d="M8 14L20 10V15L8 18zM8 22L32 15V21L8 27M20 26L32 22V26L20 30z" fill="#fff"/></svg>Shell<i class="absolute top-[57px] left-[15px] h-2 w-[11px] rounded-full bg-[#9d999b]"></i></button>
  <button class="relative flex w-[241px] shrink-0 items-center gap-[15px]"><svg class="h-10 w-10 shrink-0 bg-white p-[3px]"><use href="#ems"/></svg>EMS 2020<i class="absolute top-[57px] left-[15px] h-2 w-[11px] rounded-full bg-[#9d999b]"></i></button>
  <button class="relative flex shrink-0 items-center gap-[15px]"><svg class="h-10 w-10 shrink-0" viewBox="0 0 40 40"><rect width="30" height="30" rx="4" fill="#eee"/><path d="M6 22V6H22" fill="none" stroke="#d0511c" stroke-width="5" stroke-dasharray="5 2"/><path d="M9 24H30M24 10V30" stroke="#9aa3ab" stroke-width="4"/><circle cx="36" cy="21" r="3.500" fill="none" stroke="#2c9cd4" stroke-width="2.500"/><circle cx="21" cy="36" r="3.500" fill="none" stroke="#2c9cd4" stroke-width="2.500"/></svg><span class="w-[113px] overflow-hidden">Snipping</span><i class="absolute top-[57px] left-[15px] h-2 w-[11px] rounded-full bg-[#9d999b]"></i></button>

  <div class="mr-[49px] ml-auto flex items-center">
    <svg class="h-[18px] w-[28px]" viewBox="0 0 28 18"><path d="M2 16L14 3L26 16" fill="none" stroke="#fff" stroke-width="3"/></svg>
    <svg class="ml-[45px] h-[34px] w-[42px]" viewBox="0 0 42 34" fill="none" stroke="#fff" stroke-width="3"><path d="M3 3H39V26H3zM0 31H42M21 24V14"/><path d="M21 8L29 17H13z" fill="#fff" stroke="none"/></svg>
    <svg class="ml-[45px] h-[38px] w-[28px]" viewBox="0 0 28 38"><rect width="28" height="38" rx="13" fill="#0a84ff"/><path d="M7 12L21 26L14 33V5L21 12L7 26" fill="none" stroke="#fff" stroke-width="2"/></svg>
    <svg class="ml-[46px] h-10 w-10" viewBox="0 0 40 40" fill="none" stroke="#fff" stroke-width="2.800"><path d="M25 2H5Q2 2 2 5V28Q2 31 5 31H28M11 31V38M24 31V38M7 38H29M33 17V39"/><path d="M29 5V2H38V5M28 6H39V14Q39 17 33.500 17Q28 17 28 14z"/></svg>
    <svg class="ml-[18px] h-[30px] w-10" viewBox="0 0 40 30" fill="none" stroke="#fff" stroke-width="2.500"><path d="M2 10H8L17 2V28L8 21H2zM24 9L38 22M38 9L24 22"/></svg>
    <svg class="ml-5 h-[28px] w-[42px]" viewBox="0 0 42 28"><rect x="1.500" y="1.500" width="34" height="25" rx="5" fill="none" stroke="#fff" stroke-width="3"/><rect x="6" y="6" width="18" height="16" rx="2" fill="#fff"/><path d="M37 9H40Q42 9 42 14Q42 19 40 19H37z" fill="#fff"/></svg>
    <time class="ml-10 text-right">7:15 PM<br>8/28/2025</time>
  </div>
</footer>
</body>
</html>
